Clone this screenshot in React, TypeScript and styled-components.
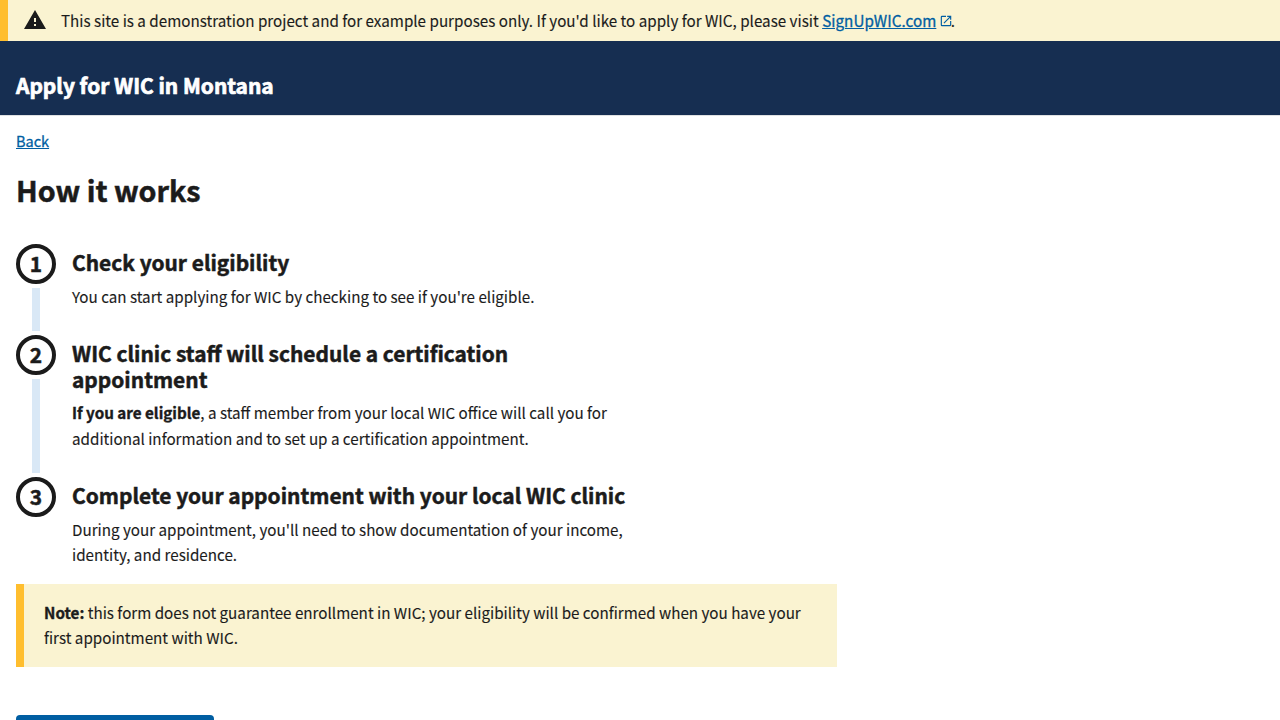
import React from "react";
import styled, { createGlobalStyle } from "styled-components";

const GlobalStyle = createGlobalStyle`
  *, *::before, *::after { box-sizing: border-box; }
  body {
    margin: 0;
    background: #fff;
    color: #1b1b1b;
    font-family: "Noto Sans CJK SC", "Open Sans", sans-serif;
    font-size: 15.2px;
    line-height: 25.44px;
    -webkit-text-stroke: 0.12px currentColor;
  }
`;

const Page = styled.div`
  height: 100vh;
  overflow: hidden;
`;
const Banner = styled.aside`
  display: flex;
  height: 41px;
  padding: 8px 0 0 15px;
  background: #faf3d1;
  border-left: 8px solid #ffbe2e;
`;
const WarningIcon = styled.svg`
  flex: none;
  width: 24px;
  height: 24px;
  margin-right: 14px;
  fill: #1b1b1b;
`;
const BannerText = styled.p`
  margin: 0;
  font-size: 15.21px;
  white-space: nowrap;
`;
const Link = styled.a`
  color: #005ea2;
  text-decoration: underline;
  -webkit-text-stroke-width: 0.3px;
`;
const BannerLink = styled(Link)`
  letter-spacing: 0.04px;
`;
const BackLink = styled(Link)`
  display: block;
  width: fit-content;
  font-size: 14.5px;
`;
const ExternalIcon = styled.svg`
  width: 14px;
  height: 14px;
  margin: 0 -1.8px 0 2.2px;
  vertical-align: -1px;
  fill: #005ea2;
`;
const Header = styled.header`
  height: 75px;
  padding: 32px 16px 0;
  background: #162e51;
  border-bottom: 1px solid #dfe1e2;
`;
const SiteTitle = styled.div`
  color: #fff;
  font-size: 20.9px;
  font-weight: 700;
  line-height: 25.7px;
  -webkit-text-stroke-width: 0.7px;
`;
const Main = styled.main`
  padding: 12px 16px 0;
`;
const PageTitle = styled.h1`
  margin: 18px 0 0;
  font-size: 28.7px;
  font-weight: 700;
  line-height: 38px;
  -webkit-text-stroke-width: 0.5px;
`;
const Steps = styled.ol`
  width: 624px;
  margin: 34.4px 0 0;
  padding: 0;
  list-style: none;
`;
const StepItem = styled.li`
  display: flex;
  gap: 16px;
`;
const Rail = styled.div`
  display: flex;
  flex: none;
  flex-direction: column;
  align-items: center;
  gap: 4px;
  width: 40px;
`;
const StepNumber = styled.span`
  display: flex;
  flex: none;
  align-items: center;
  justify-content: center;
  width: 40px;
  height: 40px;
  padding-bottom: 2px;
  border: 4px solid #1b1b1b;
  border-radius: 50%;
  font-size: 20.9px;
  font-weight: 700;
  line-height: 30px;
  -webkit-text-stroke-width: 0.5px;
`;
const Connector = styled.span`
  flex: 1;
  width: 8px;
  margin-bottom: 4px;
  background: #d9e8f6;
`;
const StepBody = styled.div<{ $last?: boolean }>`
  padding: 6.1px 0 ${(p) => (p.$last ? 0 : 25.7)}px;
`;
const StepTitle = styled.h2`
  margin: 0 0 8px;
  font-size: 20.92px;
  font-weight: 700;
  line-height: 25.7px;
  -webkit-text-stroke-width: 0.5px;
`;
const Text = styled.p`
  margin: 0;
`;
const Strong = styled.strong`
  font-weight: 700;
  -webkit-text-stroke-width: 0.35px;
`;
const Note = styled.div`
  width: 821px;
  margin-top: 16.3px;
  padding: 16px 20px;
  background: #faf3d1;
  border-left: 8px solid #ffbe2e;
`;
const StartButton = styled.button`
  display: block;
  width: 198px;
  height: 44px;
  margin-top: 48px;
  border: 0;
  border-radius: 4px;
  background: #005ea2;
`;

interface StepProps {
  n: number;
  title: string;
  last?: boolean;
  children: React.ReactNode;
}

const Step = ({ n, title, last, children }: StepProps) => (
  <StepItem>
    <Rail>
      <StepNumber>{n}</StepNumber>
      {!last && <Connector />}
    </Rail>
    <StepBody $last={last}>
      <StepTitle>{title}</StepTitle>
      <Text>{children}</Text>
    </StepBody>
  </StepItem>
);

export default function App() {
  return (
    <Page>
      <GlobalStyle />
      <Banner>
        <WarningIcon viewBox="0 0 24 24">
          <path d="M1 21h22L12 2 1 21zm12-3h-2v-2h2v2zm0-4h-2v-4h2v4z" />
        </WarningIcon>
        <BannerText>
          This site is a demonstration project and for example purposes only. If you'd like to apply for WIC, please visit{" "}
          <BannerLink href="#">SignUpWIC.com</BannerLink>
          <ExternalIcon viewBox="0 0 24 24">
            <path d="M19 19H5V5h7V3H5a2 2 0 0 0-2 2v14a2 2 0 0 0 2 2h14c1.1 0 2-.9 2-2v-7h-2v7zM14 3v2h3.59l-9.83 9.83 1.41 1.41L19 6.41V10h2V3h-7z" />
          </ExternalIcon>
          .
        </BannerText>
      </Banner>
      <Header>
        <SiteTitle>Apply for WIC in Montana</SiteTitle>
      </Header>
      <Main>
        <BackLink href="#">Back</BackLink>
        <PageTitle>How it works</PageTitle>
        <Steps>
          <Step n={1} title="Check your eligibility">
            You can start applying for WIC by checking to see if you're eligible.
          </Step>
          <Step n={2} title="WIC clinic staff will schedule a certification appointment">
            <Strong>If you are eligible</Strong>, a staff member from your local WIC office will call you for additional
            information and to set up a certification appointment.
          </Step>
          <Step n={3} title="Complete your appointment with your local WIC clinic" last>
            During your appointment, you'll need to show documentation of your income, identity, and residence.
          </Step>
        </Steps>
        <Note>
          <Text>
            <Strong>Note:</Strong> this form does not guarantee enrollment in WIC; your eligibility will be confirmed
            when you have your first appointment with WIC.
          </Text>
        </Note>
        <StartButton />
      </Main>
    </Page>
  );
}
